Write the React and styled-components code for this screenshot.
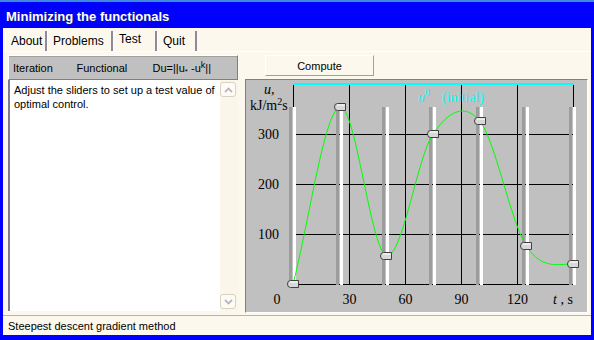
import React from "react";
import styled, { createGlobalStyle } from "styled-components";

const GlobalStyle = createGlobalStyle`
  body {
    margin: 0;
    background: #0000ff;
    font-family: "Liberation Sans", Arial, sans-serif;
  }
`;

const Frame = styled.div`
  width: 594px;
  height: 340px;
  background: #0000ff;
  display: flex;
  flex-direction: column;
  box-sizing: border-box;
  border-top: 2px solid #3c8ad8;
  overflow: hidden;
`;

const TitleBar = styled.div`
  height: 26px;
  display: flex;
  align-items: center;
  padding-left: 6px;
  padding-top: 2px;
  box-sizing: border-box;
  color: #ffffff;
  font: bold 13px "Liberation Sans", Arial, sans-serif;
  text-shadow: 1px 1px 0 #0a1a8a;
`;

const Client = styled.div`
  flex: 1;
  margin: 0 3px 5px 3px;
  background: #fdf8ee;
  display: flex;
  flex-direction: column;
`;

const TabRow = styled.div`
  display: flex;
  padding: 3px 0 0 2px;
  height: 24px;
  box-sizing: border-box;
  border-bottom: 1px solid #ffffff;
`;

const Tab = styled.div`
  width: ${(p) => p.w}px;
  height: 20px;
  box-sizing: border-box;
  border-left: 1px solid #ffffff;
  border-right: 2px solid #8c8a9c;
  font-size: 12px;
  color: #000;
  padding: ${(p) => (p.active ? "1px 0 0 5px" : "3px 0 0 5px")};
  background: #fdf8ee;
`;

const Body = styled.div`
  flex: 1;
  display: grid;
  grid-template-columns: 230px 343px;
  column-gap: 7px;
  padding: 3px 3px 0 5px;
`;

const LeftCol = styled.div`
  display: flex;
  flex-direction: column;
  height: 256px;
`;

const HeaderRow = styled.div`
  height: 25px;
  box-sizing: border-box;
  background: #c0c0c0;
  border: 1px solid #ffffff;
  border-right-color: #808080;
  border-bottom-color: #808080;
  box-shadow: inset 0 1px 0 #a0a0a0;
  display: flex;
  align-items: center;
  font-size: 11px;
  color: #000;
`;

const HeaderCell = styled.span`
  width: ${(p) => p.w}px;
  padding-left: ${(p) => p.pad}px;
  white-space: nowrap;
`;

const Sub = styled.sub`
  font-size: 8px;
  vertical-align: -2px;
`;

const Sup = styled.sup`
  font-size: 9px;
  vertical-align: 4px;
`;

const TextBox = styled.div`
  flex: 1;
  display: flex;
  border-left: 2px solid #7d7b8c;
  background: #ffffff;
`;

const TextContent = styled.div`
  flex: 1;
  padding: 3px 4px;
  font-size: 11px;
  line-height: 14px;
  color: #000;
`;

const ScrollBar = styled.div`
  width: 18px;
  background: #fbf6ea;
  display: flex;
  flex-direction: column;
  justify-content: space-between;
  padding: 2px 0;
  box-sizing: border-box;
`;

const ScrollButton = styled.div`
  width: 16px;
  height: 15px;
  box-sizing: border-box;
  border: 1px solid #d6d3c6;
  border-radius: 3px;
  background: #fdfbf4;
  display: flex;
  align-items: center;
  justify-content: center;
`;

const RightCol = styled.div`
  display: flex;
  flex-direction: column;
`;

const ComputeButton = styled.div`
  margin-left: 20px;
  width: 109px;
  height: 21px;
  box-sizing: border-box;
  border: 1px solid #ffffff;
  border-right-color: #a0a0a0;
  border-bottom-color: #a0a0a0;
  background: #fdf8ee;
  font-size: 11px;
  display: flex;
  align-items: center;
  justify-content: center;
`;

const ChartPanel = styled.div`
  margin-top: 3px;
  height: 234px;
  box-sizing: border-box;
  border: 1px solid #808080;
  border-right-color: #ffffff;
  border-bottom-color: #ffffff;
  background: #c0c0c0;
  display: flex;
`;

const StatusBar = styled.div`
  height: 19px;
  border-top: 1px solid #b8b4a8;
  display: flex;
  align-items: center;
  padding-left: 5px;
  font-size: 11px;
  color: #000;
`;

const sliders = [0, 354, 57, 300, 326, 76, 40];
const tx = (t) => 293 + (t * 280) / 150;
const vy = (v) => 284 - v * 0.5;

// catmull-rom through the slider values, flat at the right end
function curve(ys, step) {
  const n = ys.length;
  const m = ys.map((y, i) => {
    if (i === 0) return ys[1] - ys[0];
    if (i === n - 1) return 0;
    return (ys[i + 1] - ys[i - 1]) / 2;
  });
  return (t) => {
    const i = Math.min(n - 2, Math.floor(t / step));
    const s = t / step - i;
    const s2 = s * s;
    const s3 = s2 * s;
    return (
      (2 * s3 - 3 * s2 + 1) * ys[i] +
      (s3 - 2 * s2 + s) * m[i] +
      (-2 * s3 + 3 * s2) * ys[i + 1] +
      (s3 - s2) * m[i + 1]
    );
  };
}

const Chart = () => {
  const ts = sliders.map((_, i) => i * 25);
  const f = curve(sliders, 25);
  const pts = [];
  for (let t = 0; t <= 150; t += 1) pts.push(`${tx(t).toFixed(1)},${vy(f(t)).toFixed(1)}`);
  const serif = { fontFamily: '"Liberation Serif", "Times New Roman", serif', fontSize: 14 };
  return (
    <svg width="341" height="232" viewBox="246 80 341 232">
      {[0, 30, 60, 90, 120, 150].map((t) => (
        <line key={t} x1={tx(t) + 0.5} x2={tx(t) + 0.5} y1={84} y2={285} stroke="#000" />
      ))}
      {[0, 100, 200, 300].map((v) => (
        <line key={v} x1={293} x2={574} y1={vy(v) + 0.5} y2={vy(v) + 0.5} stroke="#000" />
      ))}
      <rect x={293} y={83} width={281} height={2} fill="#00ffff" />
      {ts.map((t) => {
        const x = Math.round(tx(t));
        return (
          <g key={t}>
            <rect x={x - 4} y={107} width={3} height={178} fill="#9c9c9c" />
            <rect x={x} y={107} width={3} height={178} fill="#ffffff" />
          </g>
        );
      })}
      <text x={418} y={102} fill="#00ffff" style={serif}>
        <tspan fontStyle="italic">u</tspan>
        <tspan fontSize="10" dy="-6">0</tspan>
        <tspan dy="6" dx="12">(initial)</tspan>
      </text>
      <polyline points={pts.join(" ")} fill="none" stroke="#00ff00" strokeWidth="1" />
      {ts.map((t, i) => {
        const x = Math.round(tx(t)) - 6;
        const y = Math.round(vy(sliders[i])) - 4;
        return (
          <g key={t}>
            <path
              d={`M${x + 3.5},${y + 0.5} H${x + 11.5} V${y + 7.5} H${x + 3.5} Q${x + 0.5},${y + 7.5} ${x + 0.5},${y + 4} Q${x + 0.5},${y + 0.5} ${x + 3.5},${y + 0.5} Z`}
              fill="#d8d8d8"
              stroke="#404040"
            />
            <line x1={x + 3} x2={x + 11} y1={y + 2} y2={y + 2} stroke="#ffffff" />
          </g>
        );
      })}
      <text x={264} y={94} style={{ ...serif, fontStyle: "italic" }}>u,</text>
      <text x={250} y={110} style={serif}>
        kJ/m<tspan fontSize="10" dy="-5">2</tspan>
        <tspan dy="5">s</tspan>
      </text>
      {[300, 200, 100].map((v) => (
        <text key={v} x={279} y={vy(v) + 5} textAnchor="end" style={serif}>
          {v}
        </text>
      ))}
      <text x={277} y={304} textAnchor="middle" style={serif}>0</text>
      {[30, 60, 90, 120].map((t) => (
        <text key={t} x={tx(t) + 0.5} y={304} textAnchor="middle" style={serif}>
          {t}
        </text>
      ))}
      <text x={553} y={304} style={serif}>
        <tspan fontStyle="italic">t</tspan> , s
      </text>
    </svg>
  );
};

const Chevron = ({ up }) => (
  <svg width="9" height="6" viewBox="0 0 9 6">
    <path
      d={up ? "M1,5 L4.5,1.5 L8,5" : "M1,1 L4.5,4.5 L8,1"}
      fill="none"
      stroke="#b8b8c4"
      strokeWidth="1.8"
    />
  </svg>
);

const tabs = [
  { label: "About", w: 42 },
  { label: "Problems", w: 66 },
  { label: "Test", w: 44, active: true },
  { label: "Quit", w: 40 },
];

export default function App() {
  return (
    <>
      <GlobalStyle />
      <Frame>
        <TitleBar>Minimizing the functionals</TitleBar>
        <Client>
          <TabRow>
            {tabs.map((t) => (
              <Tab key={t.label} w={t.w} active={t.active}>
                {t.label}
              </Tab>
            ))}
          </TabRow>
          <Body>
            <LeftCol>
              <HeaderRow>
                <HeaderCell w={62} pad={4}>Iteration</HeaderCell>
                <HeaderCell w={75} pad={4}>Functional</HeaderCell>
                <HeaderCell w={88} pad={4}>
                  Du=||u<Sub>*</Sub> -u<Sup>k</Sup>||
                </HeaderCell>
              </HeaderRow>
              <TextBox>
                <TextContent>
                  Adjust the sliders to set up a test value of optimal control.
                </TextContent>
                <ScrollBar>
                  <ScrollButton>
                    <Chevron up />
                  </ScrollButton>
                  <ScrollButton>
                    <Chevron />
                  </ScrollButton>
                </ScrollBar>
              </TextBox>
            </LeftCol>
            <RightCol>
              <ComputeButton>Compute</ComputeButton>
              <ChartPanel>
                <Chart />
              </ChartPanel>
            </RightCol>
          </Body>
          <StatusBar>Steepest descent gradient method</StatusBar>
        </Client>
      </Frame>
    </>
  );
}
